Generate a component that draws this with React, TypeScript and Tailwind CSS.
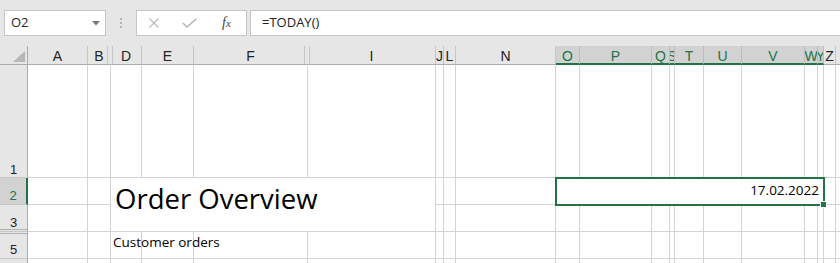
import React from "react";

type Col = { k: string; sel?: boolean; gapAfter?: boolean; gapBefore?: boolean };

// visible columns only, hidden ones (C, G, H, K, M, R, X) are skipped
const cols: Col[] = [
  { k: "A" },
  { k: "B", gapAfter: true },
  { k: "D", gapBefore: true },
  { k: "E" },
  { k: "F", gapAfter: true },
  { k: "I", gapBefore: true },
  { k: "J" },
  { k: "L" },
  { k: "N" },
  { k: "O", sel: true },
  { k: "P", sel: true },
  { k: "Q", sel: true },
  { k: "S", sel: true },
  { k: "T", sel: true },
  { k: "U", sel: true },
  { k: "V", sel: true },
  { k: "W", sel: true },
  { k: "Y", sel: true },
  { k: "Z" },
];

const GRID =
  "grid grid-cols-[28px_60px_23px_31px_52px_114px_128px_8px_12px_100px_24px_72px_18px_5px_29px_38px_63px_13px_6px_12px_1fr]";

// row 6 only peeks in at the bottom, its number is below the fold
const rows = [
  { n: "1", h: "h-[113px]", pb: "pb-[1px]" },
  { n: "2", h: "h-[27px]", pb: "pb-[2px]", sel: true },
  { n: "3", h: "h-[27px]", pb: "pb-[2px]", gapBelow: true },
  { n: "5", h: "h-[27px]", pb: "pb-[2px]", gapAbove: true },
  { n: "", h: "h-[27px]", pb: "pb-[2px]" },
];

const body = "font-['Open_Sans',sans-serif] text-black";

function Toolbar() {
  return (
    <div className="flex h-[46px] items-start bg-[#e6e6e6] pt-[10px] pl-[4px]">
      <div className="flex h-[26px] w-[102px] items-center justify-between border border-[#c6c6c6] bg-white pl-[6px] pr-[5px] font-['Open_Sans',sans-serif] text-[13px] text-[#222]">
        <span>O2</span>
        <svg width="8" height="5" viewBox="0 0 8 5">
          <polygon points="0,0 8,0 4,4.5" fill="#7a7a7a" />
        </svg>
      </div>
      <div className="flex w-[30px] flex-col items-center gap-[2px] pt-[8px]">
        <span className="h-[2px] w-[2px] bg-[#b4b4b4]" />
        <span className="h-[2px] w-[2px] bg-[#b4b4b4]" />
        <span className="h-[2px] w-[2px] bg-[#b4b4b4]" />
      </div>
      <div className="flex h-[26px] w-[111px] items-center border border-[#c6c6c6] bg-white">
        <svg className="ml-[12px]" width="10" height="10" viewBox="0 0 10 10">
          <path d="M0.5 0.5 L9.5 9.5 M9.5 0.5 L0.5 9.5" stroke="#b9b9b9" strokeWidth="1.1" />
        </svg>
        <svg className="ml-[23px]" width="15" height="10" viewBox="0 0 15 10">
          <path d="M0.8 5 L5 9 L14.2 0.8" stroke="#b9b9b9" strokeWidth="1.6" fill="none" />
        </svg>
        <span className="ml-[25px] font-['Liberation_Serif',serif] text-[14px] italic leading-none text-[#444]">
          f<span className="text-[11px]">x</span>
        </span>
      </div>
      <div className="ml-[3px] flex h-[26px] flex-1 items-center border border-[#c6c6c6] border-r-0 bg-white pl-[11px] font-['Open_Sans',sans-serif] text-[13px] text-[#222]">
        =TODAY()
      </div>
    </div>
  );
}

function Header() {
  return (
    <div className={`${GRID} h-[19px] bg-[#e6e6e6] font-['Liberation_Sans',sans-serif] text-[14px] leading-none`}>
      <div className="flex items-end justify-end border-r border-b border-r-[#ababab] border-b-[#ababab] pr-[2px] pb-[2px]">
        <svg width="12" height="11" viewBox="0 0 12 11">
          <polygon points="12,0 12,11 0,11" fill="#b7b7b7" />
        </svg>
      </div>
      {cols.map((c) => (
        <div
          key={c.k}
          className={`relative flex justify-center overflow-hidden pt-[3px] ${
            c.sel
              ? "border-r border-b-2 border-r-[#bdbdbd] border-b-[#217346] bg-[#d2d2d2] text-[#217346]"
              : "border-r border-b border-r-[#c6c6c6] border-b-[#ababab] text-[#222]"
          } ${c.gapAfter ? "border-r-transparent" : ""}`}
        >
          <span className="whitespace-nowrap">{c.k}</span>
          {c.gapAfter && <span className="absolute top-0 right-[2px] bottom-0 w-px bg-[#c6c6c6]" />}
          {c.gapBefore && <span className="absolute top-0 left-[1px] bottom-0 w-px bg-[#c6c6c6]" />}
        </div>
      ))}
      <div className="border-b border-b-[#ababab]" />
    </div>
  );
}

function RowHead({ r }: { r: (typeof rows)[number] }) {
  return (
    <div
      className={`relative flex items-end justify-center font-['Liberation_Sans',sans-serif] text-[13px] leading-none ${r.pb} ${
        r.sel
          ? "border-r-2 border-b border-r-[#217346] border-b-[#c6c6c6] bg-[#d2d2d2] text-[#217346]"
          : "border-r border-b border-r-[#ababab] border-b-[#c6c6c6] bg-[#e6e6e6] text-[#222]"
      }`}
    >
      {r.n}
      {r.gapBelow && <span className="absolute right-0 bottom-[1px] left-0 h-px bg-[#b0b0b0]" />}
      {r.gapAbove && <span className="absolute top-[1px] right-0 left-0 h-px bg-[#b0b0b0]" />}
    </div>
  );
}

const cell = "border-r border-b border-[#d4d4d4] bg-white";

function Sheet() {
  const out: React.ReactNode[] = [];
  rows.forEach((r, ri) => {
    out.push(<RowHead key={`h${ri}`} r={r} />);
    cols.forEach((c) => {
      const key = `${ri}-${c.k}`;
      // D2:I3 merged title
      if (r.n === "2" && c.k === "D") {
        out.push(
          <div
            key={key}
            className={`col-span-4 row-span-2 overflow-visible whitespace-nowrap border-r border-b border-[#d4d4d4] bg-white pt-[7px] pl-[4px] text-[27.5px] leading-none ${body}`}
          >
            Order Overview
          </div>
        );
        return;
      }
      if ((r.n === "2" || r.n === "3") && ["E", "F", "I"].includes(c.k)) return;
      if (r.n === "3" && c.k === "D") return;
      // O2:Y2 merged, selected
      if (r.n === "2" && c.k === "O") {
        out.push(
          <div
            key={key}
            className={`relative col-span-9 flex justify-end border-r border-b border-[#d4d4d4] bg-white pt-[6px] pr-[4px] text-[13.5px] leading-none ${body}`}
          >
            17.02.2022
            <span className="pointer-events-none absolute -top-px -right-[2px] -bottom-[2px] -left-px border-2 border-[#217346]" />
            <span className="absolute -right-[4px] -bottom-[4px] h-[7px] w-[7px] border border-white bg-[#217346]" />
          </div>
        );
        return;
      }
      if (r.n === "2" && c.sel) return;
      if (r.n === "5" && c.k === "D") {
        out.push(
          <div
            key={key}
            className={`overflow-visible whitespace-nowrap ${cell} pt-[4px] pl-[2px] text-[13.5px] leading-none ${body} relative z-10 bg-transparent`}
          >
            Customer orders
          </div>
        );
        return;
      }
      out.push(<div key={key} className={`${r.h} ${cell}`} />);
    });
    out.push(<div key={`e${ri}`} className={`${r.h} border-b border-[#d4d4d4] bg-white`} />);
  });

  return (
    <div className={`${GRID} grid-rows-[113px_27px_27px_27px_27px] bg-white`}>{out}</div>
  );
}

export default function App() {
  return (
    <div className="h-[263px] w-[840px] overflow-hidden bg-white">
      <Toolbar />
      <Header />
      <Sheet />
    </div>
  );
}
